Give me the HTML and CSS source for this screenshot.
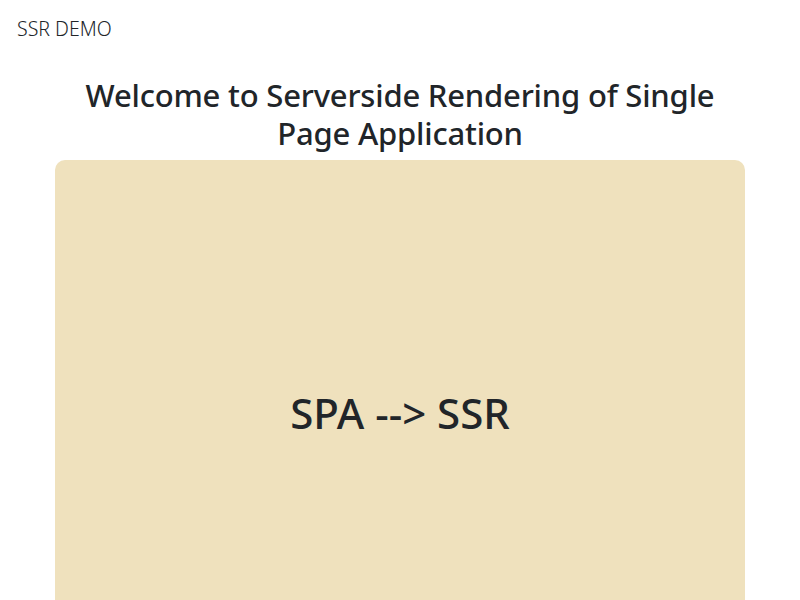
FILE: index.html
```html
<!DOCTYPE html>
<html>
<head>
<meta charset="utf-8">
<link rel="stylesheet" href="styles.css">
</head>
<body>
<header class="nav">SSR DEMO</header>
<main class="main">
  <h2 class="title">Welcome to Serverside Rendering of Single Page Application</h2>
  <section class="card">
    <h2 class="card-text">SPA --&gt; SSR</h2>
  </section>
</main>
</body>
</html>
```

FILE: styles.css
```css
html, body {
  margin: 0;
  padding: 0;
}
body {
  font-family: "Noto Sans", "Open Sans", sans-serif;
  color: #212529;
  background: #fff;
}
.nav {
  padding: 15px 17px 0 17px;
  font-size: 19.5px;
  line-height: 28px;
  height: 62px;
  box-sizing: border-box;
  font-weight: 300;
}
.main {
  width: 690px;
  margin: 0 auto;
}
.title {
  margin: 14px 0 8px;
  font-size: 31px;
  font-weight: 500;
  line-height: 38px;
  text-align: center;
  letter-spacing: -0.2px;
}
.card {
  background: #efe1bd;
  border-radius: 10px;
  height: 504px;
  display: flex;
  align-items: center;
  justify-content: center;
}
.card-text {
  margin: 0;
  font-size: 42px;
  font-weight: 500;
  letter-spacing: 0;
}
```
